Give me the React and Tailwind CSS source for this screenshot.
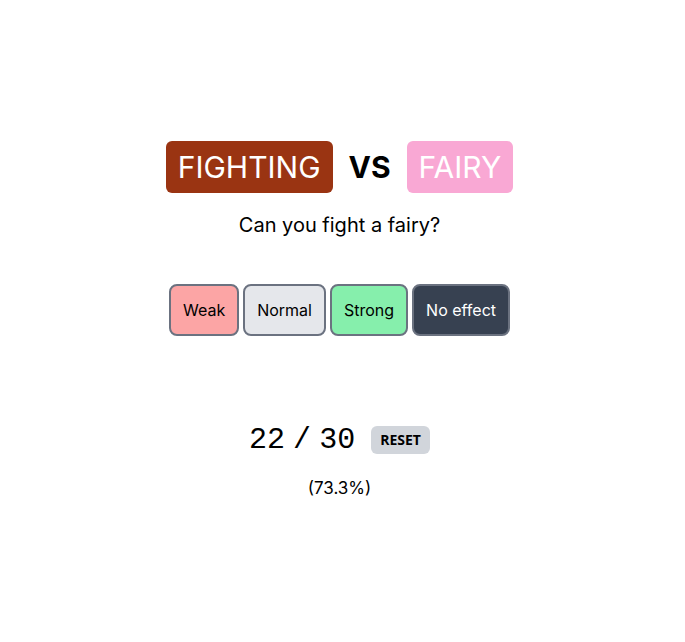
import React, { useState } from 'react';

const answers = [
  { label: 'Weak', className: 'bg-[#fca5a5] text-black' },
  { label: 'Normal', className: 'bg-[#e5e7eb] text-black' },
  { label: 'Strong', className: 'bg-[#86efac] text-black' },
  { label: 'No effect', className: 'bg-[#374151] text-white' },
];

const App = () => {
  const [score] = useState({ correct: 22, total: 30 });

  return (
    <div className="min-h-screen pr-1.5 flex flex-col items-center justify-center bg-white text-black font-['Inter',sans-serif]">
      <div className="flex items-center gap-4">
        <span className="px-3 py-2 rounded-md bg-[#9a3412] text-white text-3xl">FIGHTING</span>
        <span className="text-3xl font-bold">VS</span>
        <span className="px-3 py-2 rounded-md bg-[#f9a8d4] text-white text-3xl">FAIRY</span>
      </div>
      <p className="mt-[18px] text-xl">Can you fight a fairy?</p>

      <div className="mt-[45px] flex gap-1">
        {answers.map((a) => (
          <button
            key={a.label}
            className={`px-3 py-3 rounded-lg border-2 border-[#6b7280] ${a.className}`}
          >
            {a.label}
          </button>
        ))}
      </div>

      <div className="mt-[86px] flex items-center gap-4">
        <div className="flex items-center gap-2 text-3xl font-['Liberation_Mono',monospace]">
          <span>{score.correct}</span>
          <span>/</span>
          <span>{score.total}</span>
        </div>
        <button className="px-[9px] py-1 rounded-md bg-[#d1d5db] text-sm font-bold font-['Open_Sans',sans-serif]">
          RESET
        </button>
      </div>
      <p className="mt-[18px] text-[17px]">({((score.correct / score.total) * 100).toFixed(1)}%)</p>
    </div>
  );
};

export default App;
